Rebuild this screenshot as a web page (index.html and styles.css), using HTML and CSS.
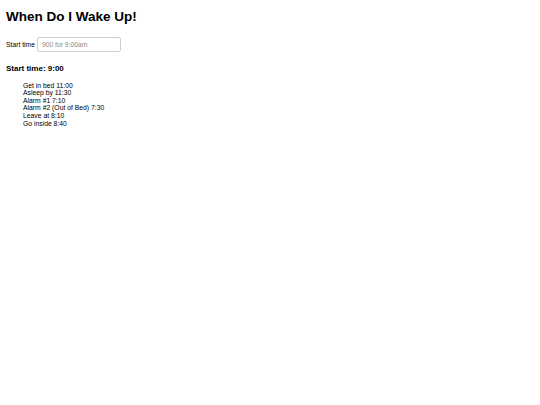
FILE: index.html
```html
<!DOCTYPE html>
<html>
<head>
<meta charset="utf-8">
<link rel="stylesheet" href="styles.css">
<title>When Do I Wake Up!</title>
</head>
<body>
<div class="page">
  <h1 class="title">When Do I Wake Up!</h1>
  <div class="field">
    <label class="label" for="start">Start time</label>
    <input class="input" id="start" type="text" placeholder="900 for 9:00am">
  </div>
  <h3 class="result">Start time: 9:00</h3>
  <ul class="schedule">
    <li>Get in bed 11:00</li>
    <li>Asleep by 11:30</li>
    <li>Alarm #1 7:10</li>
    <li>Alarm #2 (Out of Bed) 7:30</li>
    <li>Leave at 8:10</li>
    <li>Go inside 8:40</li>
  </ul>
</div>
</body>
</html>
```

FILE: styles.css
```css
html, body {
  margin: 0;
  padding: 0;
  background: #ffffff;
}
.page {
  padding: 6px 6px;
  font-family: "Liberation Sans", Arial, sans-serif;
  font-size: 6.75px;
  color: #000;
}
.title {
  font-size: 13.5px;
  font-weight: bold;
  margin: 3px 0 0;
  line-height: 1.15;
}
.field {
  display: flex;
  align-items: center;
  gap: 2px;
  margin-top: 12px;
}
.label {
  font-size: 6.75px;
}
.input {
  box-sizing: border-box;
  width: 84px;
  height: 15px;
  padding: 0 4px;
  border: 1px solid #cfcfcf;
  border-radius: 2px;
  font-family: "Liberation Sans", Arial, sans-serif;
  font-size: 6.75px;
  outline: none;
}
.input::placeholder {
  color: #8a8a8a;
}
.result {
  font-size: 8px;
  font-weight: bold;
  margin: 12px 0 0;
  line-height: 1.15;
}
.schedule {
  list-style: none;
  margin: 9px 0 0;
  padding-left: 17px;
  font-size: 6.8px;
  line-height: 7.6px;
}
```
